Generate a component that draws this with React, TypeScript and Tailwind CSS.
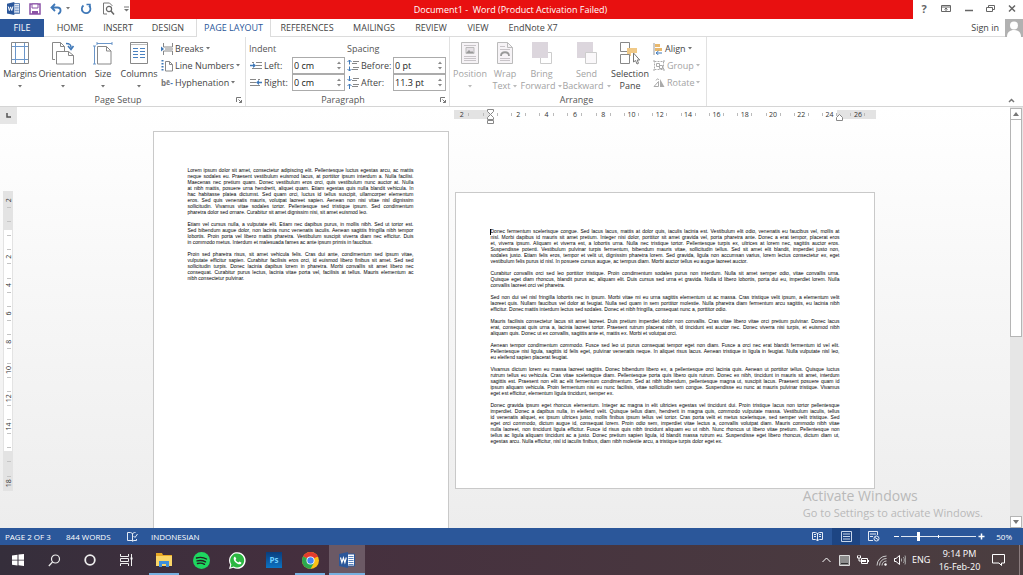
import type { ReactNode } from "react";

const TABS = [
  { name: "HOME", width: "w-[52px]" },
  { name: "INSERT", width: "w-11" },
  { name: "DESIGN", width: "w-14" },
  { name: "PAGE LAYOUT", width: "w-[75px]", active: true },
  { name: "REFERENCES", width: "w-[72px]" },
  { name: "MAILINGS", width: "w-[62px]" },
  { name: "REVIEW", width: "w-[52px]" },
  { name: "VIEW", width: "w-[42px]" },
  { name: "EndNote X7", width: "w-[68px]" },
];

const PORTRAIT_TEXT = [
  [
    "Lorem ipsum dolor sit amet, consectetur adipiscing elit. Pellentesque luctus egestas arcu, ac mattis",
    "neque sodales eu. Praesent vestibulum euismod lacus, at porttitor ipsum interdum a. Nulla facilisi.",
    "Maecenas nec pretium quam. Donec vestibulum eros orci, quis vestibulum nunc auctor at. Nulla",
    "at nibh mattis, posuere urna hendrerit, aliquet quam. Etiam egestas quis nulla blandit vehicula. In",
    "hac habitasse platea dictumst. Sed quam orci, luctus id tellus suscipit, ullamcorper elementum",
    "eros. Sed quis venenatis mauris, volutpat laoreet sapien. Aenean non nisi vitae nisl dignissim",
    "sollicitudin. Vivamus vitae sodales tortor. Pellentesque sed tristique ipsum. Sed condimentum",
    "pharetra dolor sed ornare. Curabitur sit amet dignissim nisi, sit amet euismod leo.",
  ],
  [
    "Etiam vel cursus nulla, a vulputate elit. Etiam nec dapibus purus, in mollis nibh. Sed ut tortor est.",
    "Sed bibendum augue dolor, non lacinia nunc venenatis iaculis. Aenean sagittis fringilla nibh tempor",
    "lobortis. Proin porta vel libero mattis pharetra. Vestibulum suscipit viverra diam nec efficitur. Duis",
    "in commodo metus. Interdum et malesuada fames ac ante ipsum primis in faucibus.",
  ],
  [
    "Proin sed pharetra risus, sit amet vehicula felis. Cras dui ante, condimentum sed ipsum vitae,",
    "vulputate efficitur sapien. Curabitur facilisis eros orci, id euismod libero finibus sit amet. Sed sed",
    "sollicitudin turpis. Donec lacinia dapibus lorem in pharetra. Morbi convallis sit amet libero nec",
    "consequat. Curabitur purus lectus, lacinia vitae porta vel, facilisis at tellus. Mauris elementum ac",
    "nibh consectetur pulvinar.",
  ],
];

const LANDSCAPE_TEXT = [
  [
    "Donec fermentum scelerisque congue. Sed lacus lacus, mattis at dolor quis, iaculis lacinia est. Vestibulum elit odio, venenatis eu faucibus vel, mollis at",
    "nisl. Morbi dapibus id mauris sit amet pretium. Integer nisi dolor, porttitor sit amet gravida vel, porta pharetra ante. Donec a erat tempor, placerat eros",
    "et, viverra ipsum. Aliquam et viverra est, a lobortis urna. Nulla nec tristique tortor. Pellentesque turpis ex, ultrices at lorem nec, sagittis auctor eros.",
    "Suspendisse potenti. Vestibulum pulvinar turpis fermentum, bibendum mauris vitae, sollicitudin tellus. Sed sit amet elit blandit, imperdiet justo non,",
    "sodales justo. Etiam felis eros, tempor et velit ut, dignissim pharetra lorem. Sed gravida, ligula non accumsan varius, lorem lectus consectetur ex, eget",
    "vestibulum felis purus id nisl. In posuere cursus augue, ac tempus diam. Morbi auctor tellus eu augue laoreet auctor.",
  ],
  [
    "Curabitur convallis orci sed leo porttitor tristique. Proin condimentum sodales purus non interdum. Nulla sit amet semper odio, vitae convallis urna.",
    "Quisque eget diam rhoncus, blandit purus ac, aliquam elit. Duis cursus sed urna et gravida. Nulla id libero lobortis, porta dui eu, imperdiet lorem. Nulla",
    "convallis laoreet orci vel pharetra.",
  ],
  [
    "Sed non dui vel nisl fringilla lobortis nec in ipsum. Morbi vitae mi eu urna sagittis elementum ut ac massa. Cras tristique velit ipsum, a elementum velit",
    "laoreet quis. Nullam faucibus vel dolor at feugiat. Nulla sed quam in sem porttitor molestie. Nulla pharetra diam fermentum arcu sagittis, eu lacinia nibh",
    "efficitur. Donec mattis interdum lectus sed sodales. Donec et nibh fringilla, consequat nunc a, porttitor odio.",
  ],
  [
    "Mauris facilisis consectetur lacus sit amet laoreet. Duis pretium imperdiet dolor non convallis. Cras vitae libero vitae orci pretium pulvinar. Donec lacus",
    "erat, consequat quis urna a, lacinia laoreet tortor. Praesent rutrum placerat nibh, id tincidunt est auctor nec. Donec viverra nisi turpis, et euismod nibh",
    "aliquam quis. Donec ut ex convallis, sagittis ante et, mattis ex. Morbi et volutpat orci.",
  ],
  [
    "Aenean tempor condimentum commodo. Fusce sed leo ut purus consequat tempor eget non diam. Fusce a orci nec erat blandit fermentum id vel elit.",
    "Pellentesque nisi ligula, sagittis id felis eget, pulvinar venenatis neque. In aliquet risus lacus. Aenean tristique in ligula in feugiat. Nulla vulputate nisl leo,",
    "eu eleifend sapien placerat feugiat.",
  ],
  [
    "Vivamus dictum lorem eu massa laoreet sagittis. Donec bibendum libero ex, a pellentesque orci lacinia quis. Aenean ut porttitor tellus. Quisque luctus",
    "rutrum tellus eu vehicula. Cras vitae scelerisque diam. Pellentesque porta quis libero quis rutrum. Donec ex nibh, tincidunt in mauris sit amet, interdum",
    "sagittis est. Praesent non elit ac elit fermentum condimentum. Sed at nibh bibendum, pellentesque magna ut, suscipit lacus. Praesent posuere quam id",
    "ipsum aliquam vehicula. Proin fermentum nisi eu nunc facilisis, vitae sollicitudin sem congue. Suspendisse eu nunc at mauris pulvinar tristique. Vivamus",
    "eget est efficitur, elementum ligula tincidunt, semper ex.",
  ],
  [
    "Donec gravida ipsum eget rhoncus elementum. Integer ac magna in elit ultricies egestas vel tincidunt dui. Proin tristique lacus non tortor pellentesque",
    "imperdiet. Donec a dapibus nulla, in eleifend velit. Quisque tellus diam, hendrerit in magna quis, commodo vulputate massa. Vestibulum iaculis, tellus",
    "id venenatis aliquet, ex ipsum ultrices justo, mollis finibus ipsum tellus vel tortor. Cras porta velit et metus scelerisque, sed semper velit tristique. Sed",
    "eget orci commodo, dictum augue id, consequat lorem. Proin odio sem, imperdiet vitae lectus a, convallis volutpat diam. Mauris commodo nibh vitae",
    "nulla laoreet, non tincidunt ligula efficitur. Fusce id risus quis nibh tincidunt aliquam eu ut nibh. Nunc rhoncus ut libero vitae pretium. Pellentesque non",
    "tellus ac ligula aliquam tincidunt ac a justo. Donec pretium sapien ligula, id blandit massa rutrum eu. Suspendisse eget libero rhoncus, dictum diam ut,",
    "egestas arcu. Nulla efficitur, nisl id iaculis finibus, diam nibh molestie arcu, a tristique turpis dolor eget ex.",
  ],
];

function Svg({ w, h, children, className = "" }: { w: number; h: number; children: ReactNode; className?: string }) {
  return (
    <svg width={w} height={h} viewBox={`0 0 ${w} ${h}`} fill="none" className={`shrink-0 ${className}`} aria-hidden="true">
      {children}
    </svg>
  );
}

function Caret({ className = "opacity-75" }: { className?: string }) {
  return (
    <Svg w={4} h={3} className={className}>
      <path d="M0 0h4L2 2.500z" fill="currentColor" />
    </Svg>
  );
}

function WordIcon({ size }: { size: number }) {
  return (
    <svg width={size} height={size} viewBox="0 0 16 16" fill="none" aria-hidden="true">
      <path d="M8 2h7.500v12H8z" fill="#fff" stroke="#2b579a" />
      <path d="M9.500 4.500h5M9.500 6.500h5M9.500 8.500h5M9.500 10.500h5M9.500 12.500h5" stroke="#5b84c0" />
      <path d="M0 2l9-2v16l-9-2z" fill="#2b579a" />
      <path d="M1.500 5.500l1.400 5 1.500-4.500 1.500 4.500 1.400-5" stroke="#fff" strokeWidth="1.200" />
    </svg>
  );
}

/* ---------- title bar ---------- */

function TitleBar() {
  return (
    <header className="flex h-[19px] shrink-0 bg-white">
      <div className="flex w-[130px] items-center pb-[2px] pl-[7px] text-[#3f78b8]">
        <WordIcon size={13} />
        <button aria-label="Save" className="ml-[9px]">
          <Svg w={12} h={12}>
            <path d="M1 1h10v10H1z" stroke="#8a52a6" strokeWidth="1.500" />
            <path d="M3 1h6v4H3z" fill="#fff" stroke="#8a52a6" />
            <path d="M3 8h6v3H3z" fill="#8a52a6" />
          </Svg>
        </button>
        <button aria-label="Undo" className="ml-[9px] flex items-center gap-1">
          <Svg w={12} h={12}>
            <path d="M5 1L1.500 4.500 5 8M2 4.500h5.500c4 0 4 5 .5 6.500" stroke="currentColor" strokeWidth="1.800" />
          </Svg>
          <Caret className="text-[#777]" />
        </button>
        <button aria-label="Repeat" className="ml-[10px]">
          <Svg w={12} h={12}>
            <path d="M3.500 2.500A4.300 4.300 0 1 0 9 2.700" stroke="currentColor" strokeWidth="1.800" />
            <path d="M6.500 1.500h3.500v3" stroke="currentColor" strokeWidth="1.500" />
          </Svg>
        </button>
        <button aria-label="Print preview" className="ml-[10px]">
          <Svg w={13} h={13}>
            <path d="M10 4V3.500L7.500 1H1.500v11H5" stroke="#777" />
            <circle cx="7" cy="7" r="2.600" stroke="#666" strokeWidth="1.200" />
            <path d="M9 9l3 3.500" stroke="#666" strokeWidth="1.500" />
          </Svg>
        </button>
        <button aria-label="Customize toolbar" className="ml-[9px] text-[#777]">
          <Svg w={5} h={6}>
            <path d="M0 1h5" stroke="currentColor" />
            <path d="M0 3h5L2.500 5.500z" fill="currentColor" />
          </Svg>
        </button>
      </div>
      <h1 className="flex-1 bg-[#e81010] pr-[22px] text-center text-[9px] leading-[19px] text-white">
        Document1 -&nbsp; Word (Product Activation Failed)
      </h1>
      <div className="flex w-[110px] items-center justify-between pr-[7px] pb-[2px] pl-[7px] text-[#666]">
        <button aria-label="Help" className="w-2 text-[11px] leading-4 font-bold">?</button>
        <button aria-label="Ribbon display options">
          <Svg w={10} h={9}>
            <path d="M.5 1.500h9v6h-9zM.5 3h9M5 7V4M3.500 5.500L5 4l1.500 1.500" stroke="currentColor" />
          </Svg>
        </button>
        <button aria-label="Minimize">
          <Svg w={8} h={9}><path d="M0 6.500h8" stroke="currentColor" strokeWidth="1.500" /></Svg>
        </button>
        <button aria-label="Restore">
          <Svg w={9} h={9}>
            <path d="M.5 3.500h6v4h-6zM2.500 3V1.500h6v4H7" stroke="currentColor" />
          </Svg>
        </button>
        <button aria-label="Close">
          <Svg w={8} h={9}><path d="M1 1.500l6 6M7 1.500l-6 6" stroke="currentColor" strokeWidth="1.500" /></Svg>
        </button>
      </div>
    </header>
  );
}

function TabRow() {
  return (
    <nav className="flex h-[18px] shrink-0 border-b border-[#dcdcdc] bg-white text-[9px] leading-[18px] text-[#444]">
      <button className="h-[18px] w-11 bg-[#2b579a] text-white">FILE</button>
      {TABS.map((t) => (
        <button
          key={t.name}
          className={`h-[18px] shrink-0 whitespace-nowrap ${t.width} ${
            t.active ? "border-x border-[#dcdcdc] bg-white text-[#2b579a]" : ""
          }`}
        >
          {t.name}
        </button>
      ))}
      <button className="ml-auto">Sign in</button>
      <div className="ml-[6px] h-[18px] w-[18px] bg-[#b1b1b1]">
        <Svg w={18} h={18}>
          <circle cx="9" cy="6.500" r="4" fill="#fff" />
          <path d="M2 18c0-5 3-7 7-7s7 2 7 7z" fill="#fff" />
        </Svg>
      </div>
    </nav>
  );
}

/* ---------- ribbon ---------- */

function BigButton({
  icon,
  lines,
  width,
  caret = true,
  disabled = false,
}: {
  icon: ReactNode;
  lines: string[];
  width: string;
  caret?: boolean;
  disabled?: boolean;
}) {
  return (
    <button
      disabled={disabled}
      className={`flex h-[53px] shrink-0 flex-col items-center text-[9px] leading-3 whitespace-nowrap ${width} ${
        disabled ? "text-[#a3a3a3]" : "text-[#444]"
      }`}
    >
      <span className="mb-[3px] flex h-6 items-center">{icon}</span>
      <span>{lines[0]}</span>
      <span className="flex h-3 items-center gap-[3px]">
        {lines[1]}
        {caret && <Caret />}
      </span>
    </button>
  );
}

function SmallButton({
  icon,
  label,
  disabled = false,
}: {
  icon: ReactNode;
  label: string;
  disabled?: boolean;
}) {
  return (
    <button
      disabled={disabled}
      className={`flex h-[17px] items-center gap-[2px] text-[9px] whitespace-nowrap ${
        disabled ? "text-[#a3a3a3]" : "text-[#444]"
      }`}
    >
      {icon}
      {label}
      <Caret />
    </button>
  );
}

function GroupLabel({ name, launcher = false }: { name: string; launcher?: boolean }) {
  return (
    <div className="mt-auto flex h-3 items-center pr-[3px] text-[9px] leading-3 text-[#555]">
      <span className="flex-1 text-center">{name}</span>
      {launcher && (
        <button aria-label={`${name} settings`}>
          <Svg w={6} h={6}>
            <path d="M.5 5V.5H5M2.500 2.500l3 3M5.500 3v2.500H3" stroke="#777" />
          </Svg>
        </button>
      )}
    </div>
  );
}

function SpinField({ id, icon, label, value }: { id: string; icon: ReactNode; label: string; value: string }) {
  return (
    <div className="flex h-[17px] items-center">
      {icon}
      <label htmlFor={id} className="ml-[2px] flex-1 text-[9px] whitespace-nowrap text-[#444]">
        {label}
      </label>
      <div className="flex h-[17px] w-[53px] border border-[#ababab] bg-white">
        <input id={id} defaultValue={value} className="w-0 flex-1 pl-px text-[9px] leading-[15px] text-[#222] outline-none" />
        <div className="flex w-[11px] flex-col items-center justify-evenly text-[#888]">
          <button aria-label={`Increase ${id}`}><Svg w={4} h={3}><path d="M0 3h4L2 .5z" fill="currentColor" /></Svg></button>
          <button aria-label={`Decrease ${id}`}><Svg w={4} h={3}><path d="M0 0h4L2 2.500z" fill="currentColor" /></Svg></button>
        </div>
      </div>
    </div>
  );
}

const marginsIcon = (
  <Svg w={18} h={22}>
    <path d="M.5.500h17v21H.5z" fill="#fff" stroke="#888" />
    <path d="M4.500 1v20M13.500 1v20M1 4.500h16M1 17.500h16" stroke="#6b96c9" />
  </Svg>
);
const orientationIcon = (
  <Svg w={24} h={23}>
    <path d="M1.500 17.500V.5h8l4 4v5" stroke="#888" />
    <path d="M9.500.500v4h4" stroke="#888" />
    <path d="M1.500 17.500H4" stroke="#888" />
    <path d="M5.500 9.500h12l5 4v8.500h-17z" fill="#fff" stroke="#888" />
    <path d="M17.500 9.500v4h5" stroke="#888" />
    <path d="M15 1.500c4 0 5 1 5 4M17 4l3 3.500L22.500 4" stroke="#3f78b8" strokeWidth="1.600" />
  </Svg>
);
const sizeIcon = (
  <Svg w={20} h={23}>
    <path d="M4 1.500h15M4 0v3M19 0v3M1.500 4v18M0 4h3M0 22h3" stroke="#6b96c9" />
    <path d="M4.500 4.500h9l4.500 4.500v13H4.500z" fill="#fff" stroke="#888" />
    <path d="M13.500 4.500V9H18" stroke="#888" />
  </Svg>
);
const columnsIcon = (
  <Svg w={18} h={22}>
    <path d="M.5.500h17v21H.5z" fill="#fff" stroke="#888" />
    <path d="M1 2.500h16" stroke="#bbb" />
    <path d="M3 6.500h5M3 9.500h5M3 12.500h5M3 15.500h5M10 6.500h5M10 9.500h5M10 12.500h5M10 15.500h5" stroke="#4a81c0" />
  </Svg>
);
const breaksIcon = (
  <Svg w={12} h={12}>
    <path d="M2.500 0v4h9V0M2.500 12V8h9v4M4 6h8" stroke="#888" />
    <path d="M0 3.500l3 2.500-3 2.500z" fill="#3f78b8" />
  </Svg>
);
const lineNumbersIcon = (
  <Svg w={12} h={12}>
    <path d="M1.500 0v12" stroke="#3f78b8" strokeWidth="2" strokeDasharray="1.500 1.500" />
    <path d="M4.500 1.500h4l3 3v6.500h-7z" fill="#fff" stroke="#888" />
    <path d="M8.500 1.500v3h3" stroke="#888" />
  </Svg>
);
const hyphenationIcon = (
  <span className="flex w-3 shrink-0 items-center text-[8px] leading-3 font-bold text-[#777]" aria-hidden="true">
    <span>b</span>
    <span className="text-[7px]">ē</span>
    <span className="text-[#3f78b8]">-</span>
  </span>
);
const indentLeftIcon = (
  <Svg w={12} h={9}>
    <path d="M6 1.500h6M6 4.500h6M2 7.500h10M2 1.500h2" stroke="#888" />
    <path d="M0 4.500h5" stroke="#3f78b8" strokeWidth="1.500" />
    <path d="M3 2l3 2.500L3 7z" fill="#3f78b8" />
  </Svg>
);
const indentRightIcon = (
  <Svg w={12} h={9}>
    <path d="M0 1.500h6M0 4.500h6M0 7.500h10M8 1.500h2" stroke="#888" />
    <path d="M8 4.500h4" stroke="#3f78b8" strokeWidth="1.500" />
    <path d="M9 2L6 4.500 9 7z" fill="#3f78b8" />
  </Svg>
);
const spaceBeforeIcon = (
  <Svg w={12} h={13}>
    <path d="M2.500 1v4.500M2.500 7.500V12M.5 3l2-2 2 2M.5 10l2 2 2-2" stroke="#3f78b8" />
    <path d="M6 2.500h6M5 4.500h5M6 8.500h6M5 10.500h6" stroke="#888" />
  </Svg>
);
const spaceAfterIcon = (
  <Svg w={12} h={13}>
    <path d="M2.500 0v5M2.500 8v5M.5 3l2 2 2-2M.5 10l2-2 2 2" stroke="#3f78b8" />
    <path d="M6 2.500h6M5 4.500h5M6 8.500h6M5 10.500h6" stroke="#888" />
  </Svg>
);
const positionIcon = (
  <Svg w={18} h={22}>
    <path d="M.5.500h17v21H.5z" fill="#f6f3f6" stroke="#bbb" />
    <path d="M3 3.500h12M3 14.500h12M3 16.500h12M3 18.500h12" stroke="#c8c4c8" />
    <path d="M5 5.500h8v6H5z" fill="#e5e0e5" stroke="#bbb" />
    <path d="M5 11l3-3 2 2 1-1 2 2z" fill="#999" />
  </Svg>
);
const wrapIcon = (
  <Svg w={16} h={22}>
    <path d="M.5.500h10l5 5v16H.5z" fill="#f6f3f6" stroke="#bbb" />
    <path d="M10.500.500v5h5" stroke="#bbb" />
    <path d="M3 4.500h5M3 7.500h10M3 16.500h10M3 18.500h10" stroke="#c8c4c8" />
    <path d="M4 14c0-5 8-5 8 0" stroke="#999" strokeWidth="1.800" />
  </Svg>
);
const bringIcon = (
  <Svg w={20} h={22}>
    <path d="M8.500 10.500h11v11h-11z" fill="#fff" stroke="#ccc" />
    <path d="M0 0h16v16H0z" fill="#dcd6dd" />
  </Svg>
);
const sendIcon = (
  <Svg w={20} h={22}>
    <path d="M0 0h16v16H0z" fill="#dcd6dd" />
    <path d="M8.500 10.500h11v11h-11z" fill="#faf8fa" stroke="#ccc" />
  </Svg>
);
const selectionIcon = (
  <Svg w={20} h={23}>
    <path d="M.5.500h9v9h-9z" fill="#fff" stroke="#888" />
    <path d="M7 6h10v5h-6v3H7z" fill="#f0c987" />
    <path d="M.5 12.500h9v9h-9z" fill="#fff" stroke="#888" />
    <path d="M13.500 11v9l2-1.500 1.500 3.500 1.500-.7-1.300-3.300h2.500z" fill="#fff" stroke="#777" />
  </Svg>
);
const alignIcon = (
  <Svg w={10} h={12}>
    <path d="M1 0v12" stroke="#999" />
    <path d="M2 1h5v3H2zM2 5h7v3H2z" fill="#e9b96e" />
    <path d="M9 10H3.500M5.500 8L3 10l2.500 2" stroke="#3f78b8" />
  </Svg>
);
const groupIcon = (
  <Svg w={12} h={11}>
    <path d="M1.500 1.500h9v8h-9z" stroke="#aaa" strokeDasharray="2 1" />
    <path d="M3.500 3.500h3v3h-3zM6.500 5.500h3v3h-3zM0 1h2M10 1h2M0 10h2M10 10h2" stroke="#aaa" />
  </Svg>
);
const rotateIcon = (
  <Svg w={12} h={10}>
    <path d="M1 8.500l4.500-5v5z" stroke="#aaa" />
    <path d="M7 1v8h4.500z" fill="#aaa" />
    <path d="M3 2.500C4 .5 5 .5 6 2" stroke="#aaa" />
  </Svg>
);

function Ribbon() {
  return (
    <div className="flex h-[70px] shrink-0 border-b border-[#d5d5d5] bg-white">
      <section className="flex w-[246px] shrink-0 flex-col border-r border-[#e1e1e1] pt-[3px]">
        <div className="flex">
          <div className="flex pt-px">
            <BigButton icon={marginsIcon} lines={["Margins"]} width="w-10" />
            <BigButton icon={orientationIcon} lines={["Orientation"]} width="w-[45px]" />
            <BigButton icon={sizeIcon} lines={["Size"]} width="w-9" />
            <BigButton icon={columnsIcon} lines={["Columns"]} width="w-9" />
          </div>
          <div className="ml-1">
            <SmallButton icon={breaksIcon} label="Breaks" />
            <SmallButton icon={lineNumbersIcon} label="Line Numbers" />
            <SmallButton icon={hyphenationIcon} label="Hyphenation" />
          </div>
        </div>
        <GroupLabel name="Page Setup" launcher />
      </section>

      <section className="flex w-[204px] shrink-0 flex-col border-r border-[#e1e1e1] pt-[3px]">
        <div className="flex gap-[2px] pl-[2px] text-[9px] text-[#555]">
          <div className="w-[97px]">
            <div className="h-[17px] pl-px leading-[17px]">Indent</div>
            <div className="pl-[2px]">
              <SpinField id="indent-left" icon={indentLeftIcon} label="Left:" value="0 cm" />
              <SpinField id="indent-right" icon={indentRightIcon} label="Right:" value="0 cm" />
            </div>
          </div>
          <div className="w-[99px]">
            <div className="h-[17px] leading-[17px]">Spacing</div>
            <SpinField id="spacing-before" icon={spaceBeforeIcon} label="Before:" value="0 pt" />
            <SpinField id="spacing-after" icon={spaceAfterIcon} label="After:" value="11.3 pt" />
          </div>
        </div>
        <GroupLabel name="Paragraph" launcher />
      </section>

      <section className="flex w-[257px] shrink-0 flex-col border-r border-[#e1e1e1] pt-[3px]">
        <div className="flex">
          <div className="flex pt-px">
            <BigButton icon={positionIcon} lines={["Position"]} width="w-10" disabled />
            <BigButton icon={wrapIcon} lines={["Wrap", "Text"]} width="w-[30px]" disabled />
            <BigButton icon={bringIcon} lines={["Bring", "Forward"]} width="w-[43px]" disabled />
            <BigButton icon={sendIcon} lines={["Send", "Backward"]} width="w-[47px]" disabled />
            <BigButton icon={selectionIcon} lines={["Selection", "Pane"]} width="w-10" caret={false} />
          </div>
          <div className="ml-[3px]">
            <SmallButton icon={alignIcon} label="Align" />
            <SmallButton icon={groupIcon} label="Group" disabled />
            <SmallButton icon={rotateIcon} label="Rotate" disabled />
          </div>
        </div>
        <GroupLabel name="Arrange" />
      </section>

      <button aria-label="Collapse the ribbon" className="mt-auto mr-2 mb-[3px] ml-auto text-[#777]">
        <Svg w={7} h={5}><path d="M1 4l2.500-2.500L6 4" stroke="currentColor" strokeWidth="1.500" /></Svg>
      </button>
    </div>
  );
}

/* ---------- document area ---------- */

const UNIT = 28.3; // two centimetres at 50% zoom

function HorizontalRuler() {
  const marks = Array.from({ length: 15 }, (_, i) => i - 1);
  return (
    <svg width="422" height="17" viewBox="454 107 422 17" className="text-[7px]" aria-label="Horizontal ruler">
      <rect x="454" y="110" width="422" height="9" fill="#e3e3e3" />
      <rect x="490" y="110" width="347" height="9" fill="#fff" />
      {marks.map((m) => (
        <g key={m}>
          {m !== 0 && (
            <text x={490 + m * UNIT} y="117" textAnchor="middle" fill="#333">
              {Math.abs(m) * 2}
            </text>
          )}
          {m !== -1 && <rect x={Math.round(482.500 + m * UNIT)} y="113" width="1" height="3" fill="#bbb" />}
          <rect x={Math.round(496.500 + m * UNIT)} y="113" width="1" height="3" fill="#bbb" />
        </g>
      ))}
      <path d="M487.500 109.500h6v2l-3 3-3-3zM487.500 119.500v-2l3-3 3 3v2zM487.500 120.500h6v3h-6z" fill="#fff" stroke="#888" />
      <path d="M836.500 120.500v-3l3-3 3 3v3z" fill="#fff" stroke="#888" />
    </svg>
  );
}

function VerticalRuler() {
  const marks = Array.from({ length: 11 }, (_, i) => i - 1);
  return (
    <svg width="11" height="300" viewBox="3 191 11 300" className="text-[7px]" aria-label="Vertical ruler">
      <rect x="3" y="191" width="10" height="300" fill="#e3e3e3" />
      <rect x="4" y="230" width="8" height="221" fill="#fff" />
      {marks.map((m) => {
        const y = 228.500 + m * UNIT;
        return (
          <g key={m}>
            {m !== 0 && m !== 8 && (
              <text x="0" y="0" textAnchor="middle" fill="#333" transform={`translate(11 ${y}) rotate(-90)`}>
                {Math.abs(m) * 2}
              </text>
            )}
            {m !== -1 && <rect x="7" y={Math.round(y - 7.500)} width="4" height="1" fill="#c4c4c4" />}
            {m !== 9 && <rect x="7" y={Math.round(y + 6.500)} width="4" height="1" fill="#c4c4c4" />}
          </g>
        );
      })}
    </svg>
  );
}

function Page({ paragraphs, size, cursor = false }: { paragraphs: string[][]; size: string; cursor?: boolean }) {
  return (
    <article
      className={`relative flex shrink-0 flex-col gap-[6px] border border-[#c9c9c9] bg-white pt-[35px] pr-[34px] font-['Liberation_Sans',sans-serif] text-[5px] leading-[6px] text-black ${size}`}
    >
      {cursor && <span className="absolute top-[36px] left-[34px] h-[6px] w-px bg-black" />}
      {paragraphs.map((lines, i) => (
        <p key={i}>
          {lines.map((line, j) => (
            <span
              key={j}
              className={`block whitespace-nowrap ${j < lines.length - 1 ? "[text-align-last:justify]" : ""}`}
            >
              {line}
            </span>
          ))}
        </p>
      ))}
    </article>
  );
}

function Workspace() {
  return (
    <main className="relative flex min-h-0 flex-1 bg-linear-to-b from-white to-[#ededed]">
      <div className="flex w-[17px] shrink-0 flex-col">
        <button aria-label="Tab selector" className="flex h-[17px] items-center justify-center bg-[#e6e6e6]">
          <Svg w={5} h={5}><path d="M1 0v4h4" stroke="#555" strokeWidth="1.500" /></Svg>
        </button>
        <div className="mt-[67px] ml-[3px]">
          <VerticalRuler />
        </div>
      </div>
      <div className="flex min-w-0 flex-1 flex-col">
        <div className="flex justify-center pl-[302px]">
          <HorizontalRuler />
        </div>
        <div className="min-h-0 flex-1 overflow-hidden">
          <div className="flex items-center justify-center gap-[6px] pt-[7px]">
            <Page paragraphs={PORTRAIT_TEXT} size="h-[419px] w-[296px] pl-[34px]" />
            <Page paragraphs={LANDSCAPE_TEXT} size="h-[297px] w-[420px] pl-[35px]" cursor />
          </div>
        </div>
      </div>
      <div className="flex w-[13px] shrink-0 flex-col bg-[#e6e6e6] pt-px pr-px">
        <button aria-label="Scroll up" className="flex h-3 items-center justify-center border border-[#b5b5b5] bg-white text-[#777]">
          <Svg w={6} h={4}><path d="M0 4h6L3 0z" fill="currentColor" /></Svg>
        </button>
        <div className="h-[217px] border border-t-0 border-[#b5b5b5] bg-white" />
        <button aria-label="Scroll down" className="mt-auto flex h-3 items-center justify-center border border-[#b5b5b5] bg-white text-[#777]">
          <Svg w={6} h={4}><path d="M0 0h6L3 4z" fill="currentColor" /></Svg>
        </button>
      </div>
      <div className="absolute right-10 bottom-2 text-[#b9b9b9]">
        <p className="text-[14px] leading-5">Activate Windows</p>
        <p className="text-[11px] leading-[14px]">Go to Settings to activate Windows.</p>
      </div>
    </main>
  );
}

/* ---------- bottom bars ---------- */

function StatusBar() {
  return (
    <footer className="flex h-[17px] shrink-0 items-center bg-[#2b579a] pl-[5px] text-[8px] text-white">
      <span className="w-[61px]">PAGE 2 OF 3</span>
      <span className="w-[61px]">844 WORDS</span>
      <Svg w={11} h={11}>
        <path d="M5.500 2.500v8M5.500 9.500h-5v-8h3l2 1 2-1h1M5.500 10l1.500-.5h2.500V8M6.500 5l1.500 1.500L10.500 3" stroke="#e4ebf5" />
      </Svg>
      <span className="ml-[13px]">INDONESIAN</span>
      <div className="ml-auto flex h-full items-center">
        <button aria-label="Read mode" className="flex w-[30px] justify-center">
          <Svg w={11} h={11}>
            <path d="M5.500 2v8M.5 1.500h3l2 1 2-1h3v7h-3l-2 1-2-1h-3zM2 3.500h2M2 5.500h2M7 3.500h2M7 5.500h2" stroke="#e4ebf5" />
          </Svg>
        </button>
        <button aria-label="Print layout" className="flex h-full w-7 items-center justify-center bg-[#1d4583]">
          <Svg w={11} h={11}>
            <path d="M.5.500h10v10H.5zM2 3h7M2 5.500h7M2 8h7" stroke="#c9d7ea" />
          </Svg>
        </button>
        <button aria-label="Web layout" className="flex w-7 justify-center">
          <Svg w={12} h={11}>
            <path d="M9.500 4V.5h-9v9H5M2 3h6M2 5.500h3" stroke="#e4ebf5" />
            <circle cx="8.500" cy="7.500" r="2.500" fill="#2b579a" stroke="#e4ebf5" />
            <path d="M7 6.500l3 2" stroke="#e4ebf5" />
          </Svg>
        </button>
        <button aria-label="Zoom out" className="ml-1 flex w-2 justify-center">
          <Svg w={5} h={5}><path d="M0 2.500h5" stroke="#fff" /></Svg>
        </button>
        <input
          type="range"
          min={0}
          max={100}
          defaultValue={22}
          aria-label="Zoom"
          className="mx-px h-[9px] w-[75px] appearance-none bg-[linear-gradient(#fff,#fff),linear-gradient(#dfe7f2,#dfe7f2)] bg-[size:1px_3px,100%_1px] bg-center bg-no-repeat [&::-webkit-slider-thumb]:h-[9px] [&::-webkit-slider-thumb]:w-[3px] [&::-webkit-slider-thumb]:appearance-none [&::-webkit-slider-thumb]:bg-white"
        />
        <button aria-label="Zoom in" className="flex w-2 justify-center">
          <Svg w={7} h={7}><path d="M.5 3.500h6M3.500.5v6" stroke="#fff" strokeWidth="1.500" /></Svg>
        </button>
        <span className="w-[38px] pr-[11px] text-right">50%</span>
      </div>
    </footer>
  );
}

function TaskButton({ label, children, state = "" }: { label: string; children: ReactNode; state?: "open" | "active" | "" }) {
  return (
    <button
      aria-label={label}
      className={`flex h-full w-9 items-center justify-center ${state === "active" ? "bg-[#6b5965]" : ""}`}
    >
      <span
        className={`flex h-full items-center justify-center border-y-2 border-t-transparent ${
          state === "active" ? "w-9 border-b-[#76b0e0]" : state === "open" ? "w-[30px] border-b-[#76b0e0]" : "w-[30px] border-b-transparent"
        }`}
      >
        {children}
      </span>
    </button>
  );
}

function Taskbar() {
  return (
    <footer className="flex h-[30px] shrink-0 items-center bg-linear-to-r from-[#352e3b] via-[#452f3e] via-30% to-[#4b3e40] text-[9px] text-white">
      <div className="flex h-full">
        <TaskButton label="Start">
          <Svg w={12} h={12}>
            <path d="M0 1.500l5.500-.8v5H0zM6.500.600L12 0v5.700H6.500zM0 6.500h5.500v5L0 10.700zM6.500 6.500H12V12l-5.500-.7z" fill="#fff" />
          </Svg>
        </TaskButton>
        <TaskButton label="Search">
          <Svg w={13} h={13}>
            <circle cx="7.500" cy="5" r="4" stroke="#eee" strokeWidth="1.200" />
            <path d="M4.500 8L.8 12" stroke="#eee" strokeWidth="1.200" />
          </Svg>
        </TaskButton>
        <TaskButton label="Cortana">
          <Svg w={12} h={12}><circle cx="6" cy="6" r="4.800" stroke="#eee" strokeWidth="1.800" /></Svg>
        </TaskButton>
        <TaskButton label="Task view">
          <Svg w={13} h={12}>
            <path d="M.5 0v2.500h8V0M.5 12V9.500h8V12M.5 4.500h8v3h-8zM11.500 0v12" stroke="#eee" />
            <path d="M10.500 3.500h2v2h-2z" fill="#fff" />
          </Svg>
        </TaskButton>
        <div className="w-[2px]" />
        <TaskButton label="File Explorer" state="open">
          <Svg w={16} h={14}>
            <path d="M0 0h6l1 2h9v11H0z" fill="#e8a825" />
            <path d="M0 3h16v10H0z" fill="#fad667" />
            <path d="M3 14V8h10v6h-3v-3H6v3z" fill="#3f8fdb" />
          </Svg>
        </TaskButton>
        <div className="w-px" />
        <TaskButton label="Spotify">
          <Svg w={17} h={17}>
            <circle cx="8.500" cy="8.500" r="8.500" fill="#1ed760" />
            <path d="M3.500 6c3.500-1 7-.7 10 1M4 8.900c3-.8 6-.5 8.500.9M4.500 11.500c2.500-.6 5-.4 7 .8" stroke="#222" strokeWidth="1.400" strokeLinecap="round" />
          </Svg>
        </TaskButton>
        <TaskButton label="WhatsApp">
          <Svg w={17} h={17}>
            <path d="M0 17l1.200-4.300A8.300 8.300 0 1 1 4.300 15.700z" fill="#fff" />
            <path d="M1.600 15.400l.8-3A7 7 0 1 1 4.700 14.500z" fill="#2cb742" />
            <path d="M6 4.500l1.300 2.200-.8 1.200c.7 1.300 1.600 2 2.900 2.600l1.100-1 2 1.200c-.5 2-2.200 1.900-4 1C6.400 10.700 5 9 4.700 7c-.1-1 .3-2 1.300-2.500z" fill="#fff" />
          </Svg>
        </TaskButton>
        <div className="w-px" />
        <TaskButton label="Photoshop">
          <span className="flex h-4 w-4 items-center justify-center bg-linear-to-b from-[#0a3d7c] to-[#0b74c4] text-[8px] font-bold text-[#6fd0ff]">
            Ps
          </span>
        </TaskButton>
        <TaskButton label="Chrome" state="open">
          <Svg w={17} h={17}>
            <circle cx="8.500" cy="8.500" r="8.500" fill="#fbc116" />
            <path d="M8.500 8.500L1.140 4.250A8.500 8.500 0 0 1 15.860 4.250z" fill="#e33b2e" />
            <path d="M8.500 8.500L1.140 4.250A8.500 8.500 0 0 0 8.500 17l3.700-6.400z" fill="#2ca94f" />
            <path d="M8.500 4.500h7.500" stroke="#e33b2e" />
            <circle cx="8.500" cy="8.500" r="4" fill="#fff" />
            <circle cx="8.500" cy="8.500" r="3.200" fill="#4285f4" />
          </Svg>
        </TaskButton>
        <div className="w-px" />
        <TaskButton label="Word" state="active">
          <WordIcon size={16} />
        </TaskButton>
      </div>

      <div className="ml-auto flex h-full items-center">
        <button aria-label="Show hidden icons" className="mr-[8px]">
          <Svg w={9} h={6}><path d="M.5 5l4-4 4 4" stroke="#fff" /></Svg>
        </button>
        <div className="flex items-center gap-[7px]">
          <Svg w={11} h={11}>
            <path d="M.5.500h10v10H.5z" fill="#8c8c8c" stroke="#ddd" />
            <path d="M2 8.500h7" stroke="#333" />
          </Svg>
          <Svg w={12} h={10}>
            <path d="M4.500 3.500h6v5h-6zM11.500 5v2M.5 1v2h3V1M2 3v3h2M1 0v1M3 0v1" stroke="#fff" />
            <path d="M5 5h4v2H5z" fill="#fff" />
          </Svg>
          <Svg w={11} h={11}>
            <path d="M1 10.500A9.500 9.500 0 0 1 10.500 1M3.500 10.500a7 7 0 0 1 7-7M6 10.500A4.500 4.500 0 0 1 10.500 6" stroke="#ccc" />
            <circle cx="9.500" cy="9.500" r="1.200" fill="#fff" />
          </Svg>
          <Svg w={12} h={10}>
            <path d="M.5 3.500H2L5.500.5v9L2 6.500H.5z" stroke="#fff" />
            <path d="M7.500 3.500v3M9.500 2c1 1.500 1 4.500 0 6M11 .5c1 3 1 6 0 9" stroke="#aaa" />
          </Svg>
        </div>
        <span className="ml-[6px] w-[19px]">ENG</span>
        <div className="w-[57px] text-center leading-[13px]">
          <div>9:14 PM</div>
          <div>16-Feb-20</div>
        </div>
        <button aria-label="Notifications" className="mr-[14px] ml-1">
          <Svg w={13} h={12}><path d="M.5.500h12v8.500h-3v2.500L7 9H.5z" stroke="#fff" /></Svg>
        </button>
        <div className="mr-[3px] h-full w-px bg-[#8a7c7e]" />
      </div>
    </footer>
  );
}

export default function App() {
  return (
    <div className="flex h-screen flex-col overflow-hidden bg-white font-['Open_Sans','Noto_Sans',sans-serif]">
      <TitleBar />
      <TabRow />
      <Ribbon />
      <Workspace />
      <StatusBar />
      <Taskbar />
    </div>
  );
}
